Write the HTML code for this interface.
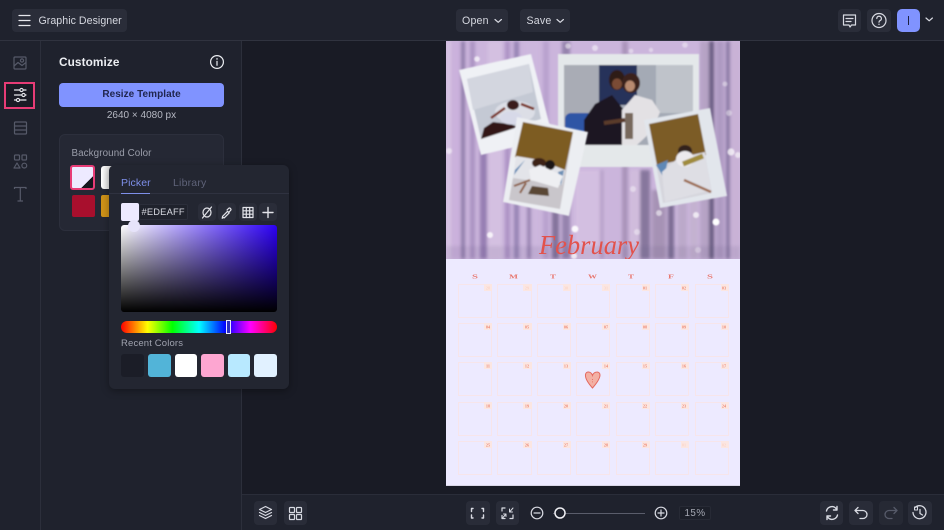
<!DOCTYPE html>
<html><head><meta charset="utf-8">
<style>
html,body{margin:0;padding:0;width:944px;height:530px;overflow:hidden;background:#191b25;font-family:"Liberation Sans",sans-serif;color:#d6d8e0}
.a{position:absolute;box-sizing:border-box}
.t{position:absolute;white-space:nowrap;line-height:14px}
.b{position:absolute;box-sizing:border-box;background:#2a2d39;border-radius:4px}
svg{position:absolute;overflow:visible}
.i{fill:none;stroke:#d8dae2;stroke-width:1.2;stroke-linecap:round;stroke-linejoin:round}
.d{fill:none;stroke:#565a69;stroke-width:1.2;stroke-linejoin:round}
</style></head><body>
<!-- bars -->
<div class="a" style="left:0;top:0;width:944px;height:41px;background:#1f222d;border-bottom:1px solid #30333f"></div>
<div class="a" style="left:0;top:41px;width:242px;height:489px;background:#1f222d;border-right:1px solid #2c2f3b"></div>
<div class="a" style="left:40px;top:41px;width:1px;height:489px;background:#2c2f3b"></div>
<div class="a" style="left:242px;top:494px;width:702px;height:36px;background:#1f222d;border-top:1px solid #2a2d39"></div>

<!-- top left -->
<div class="b" style="left:12px;top:9px;width:115px;height:23px"></div>
<svg style="left:0;top:0" width="40" height="40"><path d="M19 15.5H30M19 20.5H30M19 25.5H30" class="i" style="stroke:#e6e7ec"/></svg>
<div class="t" style="left:38.5px;top:13.5px;font-size:10.6px;letter-spacing:.05px;color:#d6d8e0">Graphic Designer</div>
<div class="b" style="left:456px;top:9px;width:52px;height:23px"></div>
<div class="t" style="left:462px;top:13.5px;font-size:10.6px;letter-spacing:.2px">Open</div>
<div class="b" style="left:520px;top:9px;width:50px;height:23px"></div>
<div class="t" style="left:526.5px;top:13.5px;font-size:10.6px;letter-spacing:.2px">Save</div>
<svg style="left:0;top:0" width="600" height="40"><path d="M495 19.5l3.2 2.8 3.2-2.8M557 19.5l3.2 2.8 3.2-2.8" class="i"/></svg>
<!-- top right -->
<div class="b" style="left:838px;top:9px;width:23px;height:23px"></div>
<svg style="left:838px;top:9px" width="23" height="23"><path d="M5.5 6H17.5V16H13.5L12 18 11 16H5.500Z" class="i"/><path d="M8 9.5H15M8 12.5H13" class="i"/></svg>
<div class="b" style="left:867px;top:9px;width:24px;height:23px"></div>
<svg style="left:867px;top:9px" width="24" height="23"><circle cx="12" cy="11.5" r="7" class="i"/><path d="M9.800 9.500a2.300 2.300 0 1 1 3.300 2.100c-.8.400-1.100.800-1.100 1.600" class="i"/><circle cx="12" cy="15.300" r=".7" fill="#d8dae2"/></svg>
<div class="a" style="left:897px;top:9px;width:23px;height:23px;border-radius:5px;background:#8093ff"></div>
<div class="a" style="left:908px;top:16px;width:1.400px;height:9px;background:#1d2140"></div>
<svg style="left:925px;top:15px" width="12" height="10"><path d="M1 3l3.200 2.800L7.400 3" class="i"/></svg>

<!-- left rail -->
<div class="a" style="left:4px;top:82px;width:31px;height:27px;border:2px solid #e73c76;background:#191b25"></div>
<svg style="left:0;top:41px" width="40" height="170">
<g class="d"><rect x="14" y="16" width="12" height="12" rx="1"/><circle cx="22" cy="19.500" r="1.600"/><path d="M14 25l4-3.500 4 3 4-3"/>
<rect x="14.500" y="81" width="12" height="12" rx="1"/><path d="M14.500 85H26.500M14.500 89H26.500"/>
<rect x="14.500" y="114" width="5" height="5" rx="1"/><rect x="22" y="114" width="4.500" height="5" rx=".6"/><path d="M17 122l3 5h-6z"/><circle cx="24.300" cy="124.600" r="2.400"/>
<path d="M14.500 148v-1.500H26v1.500M20.300 146.500V160M17.500 160H23"/></g>
<g class="i" style="stroke:#e8e9ee"><path d="M14.500 49H26M14.500 54H26M14.500 59H26"/></g>
<g fill="#191b25" stroke="#e8e9ee" stroke-width="1.100"><circle cx="21.500" cy="49" r="1.600"/><circle cx="23.500" cy="54" r="1.600"/><circle cx="18" cy="59" r="1.600"/></g>
</svg>

<!-- customize panel -->
<div class="t" style="left:59px;top:55px;font-size:11.800px;font-weight:bold;color:#eceef2;letter-spacing:.1px">Customize</div>
<svg style="left:209px;top:54px" width="16" height="16"><circle cx="8" cy="8" r="6.400" class="i" style="stroke:#eceef2"/><path d="M8 7.300V11.300" class="i" style="stroke:#eceef2"/><circle cx="8" cy="4.900" r=".8" fill="#eceef2"/></svg>
<div class="a" style="left:59px;top:83px;width:165px;height:24px;border-radius:4px;background:#8093ff"></div>
<div class="t" style="left:59px;top:88px;width:165px;text-align:center;font-size:10px;font-weight:bold;color:#20264f;letter-spacing:.05px">Resize Template</div>
<div class="t" style="left:59px;top:109px;width:165px;text-align:center;font-size:10px;color:#b6b9c3">2640 × 4080 px</div>
<div class="a" style="left:59px;top:134px;width:165px;height:97px;border-radius:6px;background:#252834;border:1px solid #2c2f3c"></div>
<div class="t" style="left:71.500px;top:147px;font-size:9.800px;color:#9b9eaa;letter-spacing:.1px">Background Color</div>
<div class="a" style="left:70px;top:165px;width:25px;height:25px;border:2px solid #e73c76;border-radius:3px;background:linear-gradient(135deg,#edeaff 0,#edeaff 72%,#15161d 72%)"></div>
<div class="a" style="left:101px;top:166px;width:23px;height:23px;border-radius:3px;background:linear-gradient(90deg,#fff,#aaa)"></div>
<div class="a" style="left:72px;top:195px;width:23px;height:22px;border-radius:2px;background:#a80f2d"></div>
<div class="a" style="left:101px;top:195px;width:23px;height:22px;border-radius:2px;background:#cf9318"></div>

<!-- canvas artwork -->
<svg style="left:446px;top:41px;overflow:hidden" width="294" height="218" viewBox="446 41 294 218">
<defs>
<filter id="bl"><feGaussianBlur stdDeviation="1.500"/></filter>
<filter id="s"><feGaussianBlur stdDeviation=".8"/></filter>
</defs>
<rect x="446" y="41" width="294" height="218" fill="#cbb5dc"/>
<g filter="url(#bl)" opacity=".85">
<rect x="446" y="41" width="6" height="218" fill="#d9c6e4"/>
<rect x="451" y="41" width="15" height="218" fill="#cbb1dc"/>
<rect x="461" y="41" width="4" height="218" fill="#806f9f"/>
<rect x="470" y="41" width="5" height="218" fill="#a58dbd"/>
<rect x="480" y="150" width="7" height="109" fill="#8d74ab"/>
<rect x="488" y="41" width="14" height="218" fill="#d6c2e2"/>
<rect x="505" y="41" width="5" height="218" fill="#a88dc1"/>
<rect x="514" y="41" width="5" height="218" fill="#8e7bad"/>
<rect x="525" y="41" width="14" height="218" fill="#cdb8de"/>
<rect x="527" y="200" width="4" height="59" fill="#8d78a9"/>
<rect x="543" y="41" width="6" height="218" fill="#b69fcc"/>
<rect x="552" y="170" width="7" height="89" fill="#77678f"/>
<rect x="562" y="41" width="8" height="218" fill="#8c7aa5"/>
<rect x="575" y="170" width="30" height="89" fill="#d5c1e2"/>
<rect x="600" y="170" width="4" height="89" fill="#b49dc6"/>
<rect x="622" y="41" width="6" height="218" fill="#a58fb5"/>
<rect x="630" y="170" width="10" height="89" fill="#d2bedd"/>
<rect x="640" y="170" width="10" height="89" fill="#7c6d93"/>
<rect x="652" y="190" width="14" height="69" fill="#a08daf"/>
<rect x="668" y="190" width="6" height="69" fill="#6d5f85"/>
<rect x="678" y="200" width="9" height="59" fill="#b9a7c7"/>
<rect x="690" y="180" width="8" height="79" fill="#c3b1cf"/>
<rect x="700" y="41" width="9" height="218" fill="#b3a0c2"/>
<rect x="709" y="41" width="5" height="218" fill="#54496f"/>
<rect x="716" y="41" width="8" height="218" fill="#a994bd"/>
<rect x="726" y="41" width="4" height="218" fill="#7e6d98"/>
<rect x="731" y="41" width="9" height="218" fill="#c9b2d6"/>
<rect x="446" y="246" width="294" height="13" fill="#4d4468" opacity=".12"/>
</g>
<g fill="#fff" filter="url(#s)">
<circle cx="477" cy="59" r="2.800" opacity=".7"/><circle cx="568" cy="46" r="2.800" opacity=".5"/><circle cx="595" cy="48" r="3" opacity=".5"/><circle cx="631" cy="51" r="2.400" opacity=".4"/>
<circle cx="651" cy="50" r="2.200" opacity=".4"/><circle cx="685" cy="45" r="2.800" opacity=".4"/><circle cx="725" cy="84" r="2.500" opacity=".4"/><circle cx="729" cy="113" r="3" opacity=".4"/>
<circle cx="731" cy="152" r="3.600" opacity=".7"/><circle cx="738" cy="155" r="3" opacity=".6"/><circle cx="449" cy="151" r="3" opacity=".5"/><circle cx="716" cy="222" r="3.500"/>
<circle cx="696" cy="215" r="3" opacity=".7"/><circle cx="659" cy="213" r="3" opacity=".55"/><circle cx="633" cy="189" r="3" opacity=".4"/><circle cx="637" cy="232" r="3" opacity=".4"/>
<circle cx="490" cy="235" r="3" opacity=".8"/><circle cx="575" cy="229" r="3.400" opacity=".9"/><circle cx="698" cy="250" r="3" opacity=".3"/><circle cx="574" cy="256" r="3" opacity=".7"/>
</g>
<!-- polaroid 1 -->
<g filter="url(#s)">
<polygon points="459,70 531,54 553,138 481,155" fill="#eff1f5"/>
<polygon points="467,79 529,64 541,119 481,139" fill="#c4c9d4"/>
<polygon points="467,79 529,64 533,92 473,110" fill="#d3d6df"/>
<ellipse cx="515" cy="112" rx="20" ry="11" fill="#dcdee6"/>
<polygon points="481,139 484,128 493,122 510,124 518,127" fill="#321216"/>
<ellipse cx="511" cy="118" rx="11" ry="6.500" fill="#d7d9e8"/>
<ellipse cx="513" cy="105" rx="6" ry="5" fill="#3a1d1e"/>
<path d="M491 118L505 108M521 104L534 109" stroke="#7a3020" stroke-width="2.600" fill="none"/>
</g>
<!-- polaroid 2 -->
<g filter="url(#s)">
<rect x="558" y="54" width="141" height="113" fill="#e4e8ea"/>
<rect x="564" y="65" width="129" height="80" fill="#a4aab5"/>
<rect x="564" y="65" width="34" height="62" fill="#a9acb5"/>
<rect x="599" y="65" width="38" height="40" fill="#27305a"/>
<rect x="656" y="65" width="37" height="48" fill="#bfc3ca"/>
<rect x="565" y="113" width="28" height="20" rx="6" fill="#2e55a5"/>
<polygon points="584,145 584,120 595,104 612,95 624,110 630,145" fill="#1c1420"/>
<ellipse cx="617" cy="80" rx="8" ry="10" fill="#2d1a18"/>
<ellipse cx="617" cy="84" rx="5" ry="5.500" fill="#7a4c34"/>
<polygon points="622,145 622,110 635,95 652,100 660,112 653,130 637,145" fill="#e3e1e4"/>
<ellipse cx="631" cy="83" rx="9" ry="10" fill="#3a211c"/>
<ellipse cx="630" cy="86" rx="5" ry="5.500" fill="#b88a70"/>
<rect x="625" y="113" width="8" height="26" fill="#77685c"/>
<path d="M604 123L625 120" stroke="#5a3a2a" stroke-width="4"/>
</g>
<!-- polaroid 3 -->
<g filter="url(#s)">
<polygon points="517,117 588,132 569,216 503,202" fill="#eceef2"/>
<polygon points="523,122 573,132 560,209 509,200" fill="#c9c6cb"/>
<polygon points="523,122 573,132 565,170 515,157" fill="#7d5c24"/>
<polygon points="516,156 540,160 565,170 562,185 513,178" fill="#e3e4e9"/>
<polygon points="515,170 525,160 514,175" fill="#5d87b4"/>
<polygon points="558,172 564,170 561,186" fill="#6d8fb5"/>
<ellipse cx="539" cy="163" rx="7" ry="5" fill="#3d2018"/><ellipse cx="550" cy="165" rx="5" ry="5" fill="#1e1717"/>
<polygon points="529,170 540,165 563,176 558,188 531,180" fill="#eeeff2"/>
<polygon points="528,194 532,186 548,188 549,196" fill="#5a4636"/>
<path d="M514 186L530 180M520 193L526 183" stroke="#8a5a3c" stroke-width="2" fill="none"/>
</g>
<!-- polaroid 4 -->
<g filter="url(#s)">
<polygon points="644,120 710,108 727,196 660,208" fill="#e2e6ec"/>
<polygon points="649,124 698,114 712,193 663,203" fill="#d6d6dd"/>
<polygon points="649,124 698,114 706,155 657,165" fill="#7c5c28"/>
<polygon points="656,165 668,160 664,178" fill="#5e88b6"/>
<polygon points="662,172 678,158 705,152 711,190 665,202" fill="#dedee4"/>
<ellipse cx="685" cy="151" rx="7" ry="6" fill="#33201d"/>
<ellipse cx="685" cy="159" rx="9" ry="8" fill="#eceaee"/>
<path d="M683 164L703 156" stroke="#a08c3e" stroke-width="5" fill="none"/>
<path d="M684 180L711 192" stroke="#9c6c50" stroke-width="2.400" fill="none"/>
</g>
<text x="539" y="254" font-family="Liberation Serif,serif" font-style="italic" font-size="27" fill="#e2524c" textLength="100" lengthAdjust="spacingAndGlyphs">February</text>
</svg>
<!-- calendar -->
<div class="a" style="left:446px;top:259px;width:294px;height:227px;background:#edeaff;border-bottom:1px solid #d8d6e6"></div>
<svg style="left:0;top:0" width="944" height="530" font-family="Liberation Serif,serif">
<g fill="none" stroke="#f7e5ea" stroke-width="1">
<rect x="458.500" y="284.500" width="33" height="33"/><rect x="497.500" y="284.500" width="34" height="33"/><rect x="537.500" y="284.500" width="33" height="33"/><rect x="576.500" y="284.500" width="33" height="33"/><rect x="616.500" y="284.500" width="33" height="33"/><rect x="655.500" y="284.500" width="33" height="33"/><rect x="695.500" y="284.500" width="33" height="33"/>
<rect x="458.500" y="323.500" width="33" height="33"/><rect x="497.500" y="323.500" width="34" height="33"/><rect x="537.500" y="323.500" width="33" height="33"/><rect x="576.500" y="323.500" width="33" height="33"/><rect x="616.500" y="323.500" width="33" height="33"/><rect x="655.500" y="323.500" width="33" height="33"/><rect x="695.500" y="323.500" width="33" height="33"/>
<rect x="458.500" y="362.500" width="33" height="33"/><rect x="497.500" y="362.500" width="34" height="33"/><rect x="537.500" y="362.500" width="33" height="33"/><rect x="576.500" y="362.500" width="33" height="33"/><rect x="616.500" y="362.500" width="33" height="33"/><rect x="655.500" y="362.500" width="33" height="33"/><rect x="695.500" y="362.500" width="33" height="33"/>
<rect x="458.500" y="402.500" width="33" height="33"/><rect x="497.500" y="402.500" width="34" height="33"/><rect x="537.500" y="402.500" width="33" height="33"/><rect x="576.500" y="402.500" width="33" height="33"/><rect x="616.500" y="402.500" width="33" height="33"/><rect x="655.500" y="402.500" width="33" height="33"/><rect x="695.500" y="402.500" width="33" height="33"/>
<rect x="458.500" y="441.500" width="33" height="33"/><rect x="497.500" y="441.500" width="34" height="33"/><rect x="537.500" y="441.500" width="33" height="33"/><rect x="576.500" y="441.500" width="33" height="33"/><rect x="616.500" y="441.500" width="33" height="33"/><rect x="655.500" y="441.500" width="33" height="33"/><rect x="695.500" y="441.500" width="33" height="33"/>
</g>
<g fill="#e8776e" font-size="6.500" font-weight="bold" lengthAdjust="spacingAndGlyphs">
<text x="472" y="278.500" textLength="6" lengthAdjust="spacingAndGlyphs">S</text><text x="509" y="278.500" textLength="9" lengthAdjust="spacingAndGlyphs">M</text><text x="550" y="278.500" textLength="6" lengthAdjust="spacingAndGlyphs">T</text><text x="588" y="278.500" textLength="9" lengthAdjust="spacingAndGlyphs">W</text><text x="628" y="278.500" textLength="6" lengthAdjust="spacingAndGlyphs">T</text><text x="668" y="278.500" textLength="6" lengthAdjust="spacingAndGlyphs">F</text><text x="707" y="278.500" textLength="6" lengthAdjust="spacingAndGlyphs">S</text></g>
<g fill="#fbe6e2"><rect x="484" y="284" width="8" height="7"/><rect x="523" y="284" width="9" height="7"/><rect x="563" y="284" width="8" height="7"/><rect x="602" y="284" width="8" height="7"/><rect x="642" y="284" width="8" height="7"/><rect x="681" y="284" width="8" height="7"/><rect x="721" y="284" width="8" height="7"/>
<rect x="484" y="323" width="8" height="7"/><rect x="523" y="323" width="9" height="7"/><rect x="563" y="323" width="8" height="7"/><rect x="602" y="323" width="8" height="7"/><rect x="642" y="323" width="8" height="7"/><rect x="681" y="323" width="8" height="7"/><rect x="721" y="323" width="8" height="7"/>
<rect x="484" y="362" width="8" height="7"/><rect x="523" y="362" width="9" height="7"/><rect x="563" y="362" width="8" height="7"/><rect x="602" y="362" width="8" height="7"/><rect x="642" y="362" width="8" height="7"/><rect x="681" y="362" width="8" height="7"/><rect x="721" y="362" width="8" height="7"/>
<rect x="484" y="402" width="8" height="7"/><rect x="523" y="402" width="9" height="7"/><rect x="563" y="402" width="8" height="7"/><rect x="602" y="402" width="8" height="7"/><rect x="642" y="402" width="8" height="7"/><rect x="681" y="402" width="8" height="7"/><rect x="721" y="402" width="8" height="7"/>
<rect x="484" y="441" width="8" height="7"/><rect x="523" y="441" width="9" height="7"/><rect x="563" y="441" width="8" height="7"/><rect x="602" y="441" width="8" height="7"/><rect x="642" y="441" width="8" height="7"/><rect x="681" y="441" width="8" height="7"/><rect x="721" y="441" width="8" height="7"/></g>
<g fill="#fbd5c8" font-size="4.200" font-weight="bold" text-anchor="middle">
<text x="488" y="289.500">28</text><text x="527" y="289.500">29</text><text x="566" y="289.500">30</text><text x="606" y="289.500">31</text><text x="684" y="446.500">01</text><text x="724" y="446.500">02</text></g>
<g fill="#ee8a74" font-size="4.200" font-weight="bold" text-anchor="middle">
<text x="645" y="289.500">01</text><text x="684" y="289.500">02</text><text x="724" y="289.500">03</text>
<text x="488" y="328.500">04</text><text x="527" y="328.500">05</text><text x="566" y="328.500">06</text><text x="606" y="328.500">07</text><text x="645" y="328.500">08</text><text x="684" y="328.500">09</text><text x="724" y="328.500">10</text>
<text x="488" y="367.500">11</text><text x="527" y="367.500">12</text><text x="566" y="367.500">13</text><text x="606" y="367.500">14</text><text x="645" y="367.500">15</text><text x="684" y="367.500">16</text><text x="724" y="367.500">17</text>
<text x="488" y="407.500">18</text><text x="527" y="407.500">19</text><text x="566" y="407.500">20</text><text x="606" y="407.500">21</text><text x="645" y="407.500">22</text><text x="684" y="407.500">23</text><text x="724" y="407.500">24</text>
<text x="488" y="446.500">25</text><text x="527" y="446.500">26</text><text x="566" y="446.500">27</text><text x="606" y="446.500">28</text><text x="645" y="446.500">29</text></g>
<path d="M592.500 388C588 383 585 378 585.500 374.500C586 371 591 371 592.500 375.500C594 371 600 371 600 375C600 379 596 384 592.500 388Z" fill="#f3b0a4" stroke="#e4685f" stroke-width="1"/>
<path d="M592.500 379v4" stroke="#e4685f" stroke-width=".8" stroke-dasharray="1 1.400"/>
</svg>

<!-- popup -->
<div class="a" style="left:109px;top:165px;width:180px;height:224px;border-radius:6px;background:#232631;box-shadow:0 2px 8px rgba(0,0,0,.35)"></div>
<div class="t" style="left:121px;top:175.500px;font-size:10.500px;letter-spacing:.1px;color:#7e8fe9">Picker</div>
<div class="t" style="left:173px;top:175.500px;font-size:10.500px;letter-spacing:.2px;color:#5f6379">Library</div>
<div class="a" style="left:109px;top:193px;width:180px;height:1px;background:#2f3240"></div>
<div class="a" style="left:121px;top:192.500px;width:29px;height:1.500px;background:#7e8fe9"></div>
<div class="a" style="left:139px;top:204px;width:49px;height:16px;border-radius:2px;background:#1f222c;border:1px solid #2b2e3a"></div>
<div class="t" style="left:141.500px;top:205px;font-size:9.300px;letter-spacing:.2px;color:#d8dae2">#EDEAFF</div>
<div class="a" style="left:121px;top:203px;width:18px;height:18px;border-radius:2px;background:#edeaff"></div>
<div class="b" style="left:198px;top:203px;width:18px;height:18px"></div>
<div class="b" style="left:218px;top:203px;width:18px;height:18px"></div>
<div class="b" style="left:239px;top:203px;width:18px;height:18px"></div>
<div class="b" style="left:259px;top:203px;width:18px;height:18px"></div>
<svg style="left:0;top:0" width="300" height="240">
<g class="i" style="stroke:#e2e3e9"><ellipse cx="207" cy="212.500" rx="4" ry="4.500"/><path d="M202.500 218L211.500 207"/>
<path d="M223 217.500l-.8.800.4-2 5-5 1.600 1.600-5 5zM227 210l1.500-1.500a1.400 1.400 0 0 1 2 2L229 212"/>
<rect x="243" y="207.500" width="10" height="10"/><path d="M246.300 207.500v10M249.700 207.500v10M243 210.800h10M243 214.200h10"/>
<path d="M268 207.500v10M263 212.500h10" style="stroke-width:1.400"/></g></svg>
<div class="a" style="left:121px;top:225px;width:156px;height:87px;border-radius:3px;background:linear-gradient(180deg,rgba(0,0,0,0),#000),linear-gradient(90deg,#fff,#2c00f5)"></div>
<div class="a" style="left:127.500px;top:219.500px;width:12px;height:12px;border-radius:50%;background:#e6e3fa"></div>
<div class="a" style="left:121px;top:321px;width:156px;height:12px;border-radius:6px;background:linear-gradient(90deg,#ff0000 0,#ffff00 17%,#00ff00 33%,#00ffff 50%,#0000ff 67%,#ff00ff 83%,#ff0000 100%)"></div>
<div class="a" style="left:226px;top:320px;width:5px;height:14px;background:#2a2ec0;border:1.200px solid #e8e8ff"></div>
<div class="t" style="left:121px;top:337px;font-size:9.500px;letter-spacing:.15px;color:#a0a3af">Recent Colors</div>
<div class="a" style="left:121px;top:354px;width:23px;height:23px;border-radius:3px;background:#1b1d27"></div>
<div class="a" style="left:148px;top:354px;width:23px;height:23px;border-radius:3px;background:#52b4d8"></div>
<div class="a" style="left:175px;top:354px;width:22px;height:23px;border-radius:3px;background:#ffffff"></div>
<div class="a" style="left:201px;top:354px;width:23px;height:23px;border-radius:3px;background:#fda6d1"></div>
<div class="a" style="left:228px;top:354px;width:22px;height:23px;border-radius:3px;background:#b8e9ff"></div>
<div class="a" style="left:254px;top:354px;width:23px;height:23px;border-radius:3px;background:#e1f1ff"></div>

<!-- bottom bar -->
<div class="b" style="left:254px;top:501px;width:23px;height:24px;background:#292c38"></div>
<div class="b" style="left:284px;top:501px;width:23px;height:24px;background:#292c38"></div>
<div class="b" style="left:466px;top:501px;width:24px;height:24px;background:#292c38"></div>
<div class="b" style="left:496px;top:501px;width:23px;height:24px;background:#292c38"></div>
<div class="b" style="left:820px;top:501px;width:23px;height:24px;background:#292c38"></div>
<div class="b" style="left:849px;top:501px;width:24px;height:24px;background:#292c38"></div>
<div class="b" style="left:879px;top:501px;width:24px;height:24px;background:#262934"></div>
<div class="b" style="left:908px;top:501px;width:24px;height:24px;background:#292c38"></div>
<div class="a" style="left:679px;top:506px;width:32px;height:14px;border-radius:2px;background:#1c1f29;border:1px solid #272a35"></div>
<div class="t" style="left:679px;top:506.500px;width:32px;text-align:center;font-size:9.800px;letter-spacing:.5px;color:#a5a8b3">15%</div>
<div class="a" style="left:553px;top:512.500px;width:92px;height:1px;background:#5a5d6b"></div>
<svg style="left:0;top:490px" width="944" height="40">
<g class="i">
<path d="M265.500 16.500l6 3-6 3-6-3zM259.500 22.500l6 3 6-3M259.500 25.500l6 3 6-3"/>
<rect x="289.500" y="17.500" width="5" height="5" rx=".8"/><rect x="296.500" y="17.500" width="5" height="5" rx=".8"/><rect x="289.500" y="24.500" width="5" height="5" rx=".8"/><rect x="296.500" y="24.500" width="5" height="5" rx=".8"/>
<path d="M473 18.500h-1.500v3M482 18.500h1.500v3M473 28h-1.500v-3M482 28h1.500v-3" style="stroke-width:1.400"/>
<path d="M502 18h3M502 18v3M502 28.500h3M502 25.500v3M513 28.500h-3M513 25v3" style="stroke-width:1.200"/>
<path d="M506 24l-3 3.500M503.500 24h2.500v2.500M509.500 22l3.500-4M512.500 22h-3v-3" style="stroke-width:1"/>
<circle cx="537" cy="23" r="5.800"/><path d="M534 23h6"/>
<circle cx="661" cy="23" r="5.800"/><path d="M658 23h6M661 20v6"/>
<path d="M826.500 21a5.500 5.500 0 0 1 9.500-2.500l1 1.500M837 16.500v3.500h-3.500M837.500 25a5.500 5.500 0 0 1-9.500 2.500L827 26M827 29.500V26h3.500" style="stroke-width:1.400"/>
<path d="M858 17.500l-3 3 3 3M855 20.500h8a4 4 0 0 1 0 8h-3" style="stroke-width:1.300"/>
<path d="M894 17.500l3 3-3 3M897 20.500h-8a4 4 0 0 0 0 8h3" style="stroke:#565a69;stroke-width:1.300"/>
<path d="M915 17.500a6.500 6.500 0 1 1-2 5M920 19.500V23.500l2.500 1.500" style="stroke-width:1.300"/><path d="M914.500 17h3v3h-3z" style="stroke-width:1"/>
</g>
<circle cx="560" cy="23" r="5" fill="#1f222d" stroke="#f0f0f4" stroke-width="1.500"/>
</svg>
</body></html>
